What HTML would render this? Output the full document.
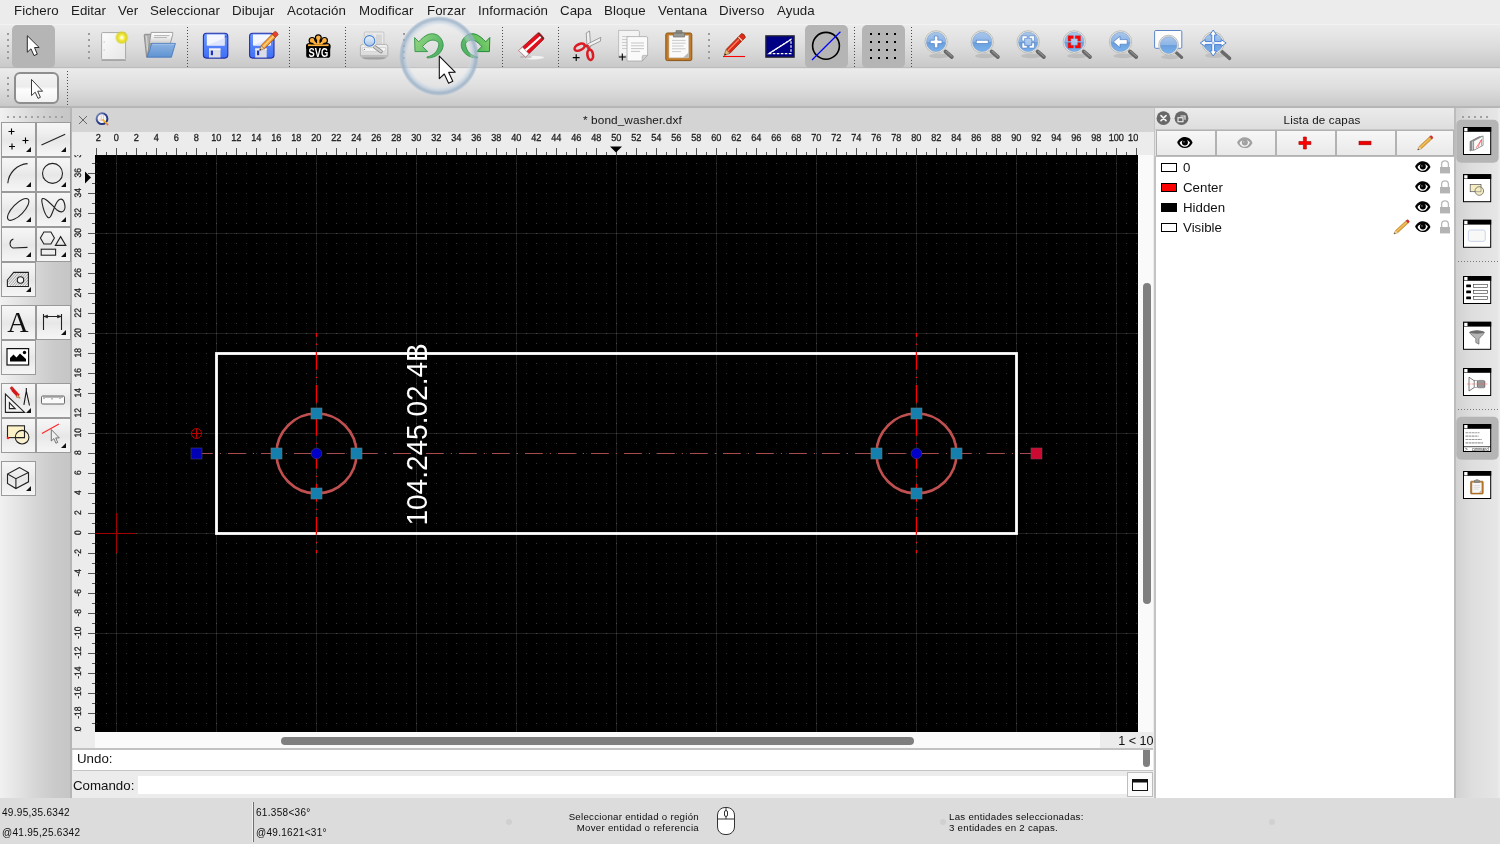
<!DOCTYPE html>
<html lang="es"><head><meta charset="utf-8"><title>bond_washer.dxf</title>
<style>
*{box-sizing:border-box;margin:0;padding:0}
html,body{width:1500px;height:844px;overflow:hidden;background:#ececec;font-family:"Liberation Sans",sans-serif;color:#111;}
.abs{position:absolute}
#app{will-change:transform;position:relative;width:1500px;height:844px;overflow:hidden;background:#ececec}
#menubar{position:absolute;left:0;top:0;width:1500px;height:24px;background:#ececec}
#menubar span{position:absolute;top:3px;font-size:13.3px;line-height:16px;color:#1c1c1c;white-space:nowrap;letter-spacing:0.05px}
#tb1{position:absolute;left:0;top:24px;width:1500px;height:44px;background:linear-gradient(#ebebeb 0%,#dfdfdf 45%,#c9c9c9 100%);border-top:1px solid #f2f2f2;border-bottom:1px solid #bbbbbb}
#tb2{position:absolute;left:0;top:68px;width:1500px;height:40px;background:linear-gradient(#ebebeb 0%,#dedede 50%,#c9c9c9 100%);border-top:1px solid #e4e4e4;border-bottom:2px solid #b6b6b6}
.sel{position:absolute;background:#b5b5b5;border-radius:5px}
.vdots{position:absolute;width:2px;background:repeating-linear-gradient(180deg,#9c9c9c 0 2px,transparent 2px 6px)}
.vsep{position:absolute;width:1px;background:repeating-linear-gradient(180deg,#4a4a4a 0 1px,transparent 1px 3px)}
#lefttb{position:absolute;left:0;top:108px;width:72px;height:690px;background:linear-gradient(90deg,#f1f1f1 0%,#e6e6e6 21%,#d6d6d6 49%,#cacaca 76%,#c6c6c6 97%,#b6b6b6 97.5%,#b6b6b6 100%)}
.lb{position:absolute;width:35px;height:35px;border:1px solid #9a9a9a;background:linear-gradient(#f6f6f6 0%,#efefef 30%,#e7e7e7 52%,#eeeeee 72%,#f5f5f5 100%)}
.lb svg{position:absolute;left:0;top:0}
.lb i{position:absolute;right:4px;bottom:4px;width:0;height:0;border-left:5px solid transparent;border-bottom:5px solid #111}
#tabbar{position:absolute;left:72px;top:108px;width:1083px;height:24px;background:#d4d4d4}
#rulerT{position:absolute;left:72px;top:132px;width:1083px;height:23px;background:#ececec;overflow:hidden}
#rulerL{position:absolute;left:72px;top:155px;width:23px;height:577px;background:#ececec;overflow:hidden}
#canvas{position:absolute;left:95px;top:155px;width:1043px;height:577px;background:#000}
.rt{text-rendering:geometricPrecision;font-size:10.200px;fill:#1c1c1c;stroke:#1c1c1c;stroke-width:0.300px;font-family:"Liberation Sans",sans-serif}
#statusbar{position:absolute;left:0;top:798px;width:1500px;height:46px;background:#dcdcdc}
#statusbar div{position:absolute;font-size:9.700px;color:#0c0c0c;white-space:nowrap;letter-spacing:0.270px}
#statusbar div.c{font-size:10px;letter-spacing:0.300px}
#rpanel{position:absolute;left:1155px;top:108px;width:299px;height:690px;background:#e2e2e2}
#righttb{position:absolute;left:1454px;top:108px;width:46px;height:690px;background:linear-gradient(90deg,#f0f0f0 0,#f0f0f0 0.5px,#bcbcbc 0.5px,#bcbcbc 2px,#d2d2d2 2px,#dedede 40%,#e6e6e6 96%,#ececec 97%,#ececec 100%)}
</style></head><body><div id="app">

<div id="menubar">
<span style="left:14px">Fichero</span><span style="left:71px">Editar</span><span style="left:118px">Ver</span><span style="left:150px">Seleccionar</span><span style="left:232px">Dibujar</span><span style="left:287px">Acotación</span><span style="left:359px">Modificar</span><span style="left:427px">Forzar</span><span style="left:478px">Información</span><span style="left:560px">Capa</span><span style="left:604px">Bloque</span><span style="left:658px">Ventana</span><span style="left:719px">Diverso</span><span style="left:777px">Ayuda</span>
</div>

<div id="tb1">
<div class="vdots" style="left:7px;top:8px;height:26px"></div>
<div class="sel" style="left:12px;top:0px;width:43px;height:43px"></div>
<div class="vdots" style="left:88px;top:8px;height:27px"></div>
<div class="vsep" style="left:187px;top:2px;height:40px"></div>
<div class="vsep" style="left:289px;top:2px;height:40px"></div>
<div class="vsep" style="left:345px;top:2px;height:40px"></div>
<div class="vdots" style="left:403px;top:8px;height:27px"></div>
<div class="vsep" style="left:502px;top:2px;height:40px"></div>
<div class="vsep" style="left:558px;top:2px;height:40px"></div>
<div class="vdots" style="left:708px;top:8px;height:27px"></div>
<div class="sel" style="left:805px;top:0px;width:43px;height:43px"></div>
<div class="vsep" style="left:854px;top:2px;height:40px"></div>
<div class="sel" style="left:862px;top:0px;width:43px;height:43px"></div>
<div class="vsep" style="left:911px;top:2px;height:40px"></div>
<svg class="abs" style="left:0;top:-1px" width="1500" height="44" viewBox="0 24 1500 44">
<defs>
<linearGradient id="gPaper" x1="0" y1="0" x2="1" y2="1"><stop offset="0" stop-color="#fdfdfd"/><stop offset="1" stop-color="#e6e6e6"/></linearGradient>
<radialGradient id="gGlow"><stop offset="0" stop-color="#fffff4"/><stop offset="0.180" stop-color="#fffbc0"/><stop offset="0.400" stop-color="#f2ea38"/><stop offset="0.720" stop-color="#dcd420" stop-opacity="0.900"/><stop offset="1" stop-color="#d8d020" stop-opacity="0"/></radialGradient>
<linearGradient id="gFolder" x1="0" y1="0" x2="0" y2="1"><stop offset="0" stop-color="#8db3e2"/><stop offset="1" stop-color="#5f93d2"/></linearGradient>
<linearGradient id="gFloppy" x1="0" y1="0" x2="0" y2="1"><stop offset="0" stop-color="#6d97ff"/><stop offset="1" stop-color="#3f6ff5"/></linearGradient>
<linearGradient id="gGreen" x1="0" y1="0" x2="1" y2="0.600"><stop offset="0" stop-color="#8ed46e"/><stop offset="0.500" stop-color="#5fbe60"/><stop offset="1" stop-color="#34a54c"/></linearGradient>
<linearGradient id="gLens" x1="0" y1="0" x2="0" y2="1"><stop offset="0" stop-color="#a9c6ea"/><stop offset="0.48" stop-color="#8db5e6"/><stop offset="0.5" stop-color="#6b9fdc"/><stop offset="1" stop-color="#79b0ec"/></linearGradient>
<linearGradient id="gPrn" x1="0" y1="0" x2="0" y2="1"><stop offset="0" stop-color="#f2f2f2"/><stop offset="1" stop-color="#d4d4d4"/></linearGradient>
<linearGradient id="gPLens" x1="0" y1="0" x2="0" y2="1"><stop offset="0" stop-color="#eaf2fb"/><stop offset="0.600" stop-color="#c4d8ee"/><stop offset="1" stop-color="#a4c0e2"/></linearGradient>
<linearGradient id="gFPaper" x1="0" y1="0" x2="0" y2="1"><stop offset="0" stop-color="#ffffff"/><stop offset="0.250" stop-color="#ececec"/><stop offset="0.550" stop-color="#c2c2c2"/><stop offset="1" stop-color="#d8d8d8"/></linearGradient>
<g id="mag">
<ellipse cx="3" cy="14" rx="10" ry="2.300" fill="#8a8a8a" opacity="0.300"/>
<path d="M9.400 9.600L15.700 15.100" stroke="#666" stroke-width="3.800" stroke-linecap="round"/>
<path d="M10 9.400L15.800 14.500" stroke="#8e8e8e" stroke-width="1.200" stroke-linecap="round"/>
<circle cx="0" cy="0" r="11.2" fill="#ecece6" stroke="#b9b9b4" stroke-width="0.9"/>
<circle cx="0" cy="0" r="9.7" fill="url(#gLens)" stroke="#7f9fca" stroke-width="0.6"/>
</g>
</defs>
<!-- select arrow (white with black outline) -->
<path d="M27.3 35.7V52.2L31 48.8L34 55.6L37.3 54.2L34.5 47.5H39.2Z" fill="#fff" stroke="#2a2a2a" stroke-width="1" stroke-linejoin="round"/>
<!-- new document -->
<path d="M101.5 59.8H126V61H101.5Z" fill="#8a8a8a" opacity="0.6"/>
<rect x="101.6" y="32.6" width="24" height="27" rx="1" fill="url(#gPaper)" stroke="#a8a8a8" stroke-width="1"/>
<rect x="103.5" y="41.5" width="1.5" height="1" fill="#c8c8c8"/><rect x="103.5" y="49.5" width="1.5" height="1" fill="#c8c8c8"/>
<circle cx="121.8" cy="37.6" r="7" fill="url(#gGlow)"/>
<!-- open folder -->
<path d="M144.200 35.200Q144.200 34.300 145.100 34.300H152V55L146.600 57.200Z" fill="#b2b2b2" stroke="#7c7c7c" stroke-width="0.800" stroke-linejoin="round"/>
<path d="M146.300 36L148 56" stroke="#d6d6d6" stroke-width="1.200"/>
<path d="M151.200 32.400H172.700V34.500L170.300 43.600H150L147.400 55.500Z" fill="url(#gFPaper)" stroke="#8c8c8c" stroke-width="0.800" stroke-linejoin="round"/>
<path d="M154.200 35.600H169.500M153.800 37.600H167" stroke="#b2b2b2" stroke-width="1"/>
<path d="M151.600 43.400H175.400L171.400 57.200H147Q149.800 51.500 151.600 43.400Z" fill="url(#gFolder)" stroke="#4a7cc0" stroke-width="0.900" stroke-linejoin="round"/>
<path d="M152.300 44.300H174.400" stroke="#a8c6ea" stroke-width="0.800"/>
<!-- save -->
<g id="floppy">
<rect x="203.4" y="33.3" width="24.4" height="24.8" rx="3" fill="url(#gFloppy)" stroke="#2630a8" stroke-width="1.1"/>
<path d="M206.8 34.5H224.6V45.5H206.8Z" fill="#f4f6ff"/>
<path d="M206.8 45.5L224.6 38V45.5Z" fill="#dfe6fb"/>
<path d="M209 48.5H220.5V57.5H209Z" fill="#dcdce4"/>
<path d="M209 48.5H220.5V50H209Z" fill="#f4f4f8"/>
<rect x="210.8" y="50.6" width="2.2" height="4.6" fill="#1c34c0"/>
<rect x="225.3" y="35.8" width="1.2" height="1.6" fill="#2c44c8"/>
</g>
<use href="#floppy" x="46.2"/>
<!-- pencil on save-as -->
<path d="M264.350 48.800L261.050 45.600L272.250 34.100L275.550 37.300Z" fill="#f5a030" stroke="#a8561a" stroke-width="0.800" stroke-linejoin="round"/>
<path d="M262.700 47.200L273.900 35.700" stroke="#ffd28a" stroke-width="1.300"/>
<path d="M275.550 37.300L272.250 34.100L274.850 31.400Q277.400 31.600 278.150 34.600Z" fill="#e8402a" stroke="#a02818" stroke-width="0.700" stroke-linejoin="round"/>
<path d="M259.600 50.400L261.050 45.600L264.350 48.800Z" fill="#ecd0a8" stroke="#8a5a3a" stroke-width="0.600" stroke-linejoin="round"/>
<path d="M259.600 50.400L260.100 48.700L261.300 49.900Z" fill="#222"/>
<!-- SVG export -->
<path d="M318.3 46.6L327.1 46.6 M318.3 46.6L324.5 40.4 M318.3 46.6L318.3 37.8 M318.3 46.6L312.1 40.4 M318.3 46.6L309.5 46.6" stroke="#000" stroke-width="5" stroke-linecap="round" fill="none"/>
<circle cx="327.1" cy="46.6" r="3.500" fill="#000"/><circle cx="324.5" cy="40.4" r="3.500" fill="#000"/><circle cx="318.3" cy="37.8" r="3.500" fill="#000"/><circle cx="312.1" cy="40.4" r="3.500" fill="#000"/><circle cx="309.5" cy="46.6" r="3.500" fill="#000"/>
<path d="M318.3 46.6L327.1 46.6 M318.3 46.6L324.5 40.4 M318.3 46.6L318.3 37.8 M318.3 46.6L312.1 40.4 M318.3 46.6L309.5 46.6" stroke="#ffb13b" stroke-width="2.400" stroke-linecap="round" fill="none"/>
<circle cx="327.1" cy="46.6" r="2.300" fill="#ffb13b"/><circle cx="324.5" cy="40.4" r="2.300" fill="#ffb13b"/><circle cx="318.3" cy="37.8" r="2.300" fill="#ffb13b"/><circle cx="312.1" cy="40.4" r="2.300" fill="#ffb13b"/><circle cx="309.5" cy="46.6" r="2.300" fill="#ffb13b"/>
<rect x="306.200" y="46" width="24" height="11.800" rx="2.600" fill="#000"/>
<path d="M306.200 48.600V44.600H330.200V48.600Z" fill="#000"/>
<path d="M308 45.300H328.600" stroke="#ffb13b" stroke-width="1.600"/>
<text x="318.300" y="56.700" text-anchor="middle" font-family="Liberation Sans, sans-serif" font-weight="bold" font-size="13.400" fill="#fff" textLength="19.600" lengthAdjust="spacingAndGlyphs">SVG</text>
<!-- print preview -->
<ellipse cx="374" cy="58" rx="12" ry="1.600" fill="#777" opacity="0.550"/>
<rect x="364.300" y="32" width="19.600" height="14" rx="1" fill="#ebebeb" stroke="#bdbdbd" stroke-width="0.800"/>
<rect x="376" y="34.500" width="6" height="9.500" fill="#d6d6d6"/>
<rect x="360.400" y="44.400" width="27.400" height="12.800" rx="2.200" fill="url(#gPrn)" stroke="#a6a6a6" stroke-width="0.800"/>
<path d="M362.400 47.600H385.600V49.600Q385.600 51.400 383.800 51.400H364.200Q362.400 51.400 362.400 49.600Z" fill="#f6f6f6" stroke="#c2c2c2" stroke-width="0.600"/>
<circle cx="364.400" cy="49.400" r="0.600" fill="#777"/>
<path d="M360.800 55H387.400V55.600Q387.400 56.900 386 56.900H362.200Q360.800 56.900 360.800 55.600Z" fill="#bdbdbd"/>
<path d="M374.800 47L381 51.500" stroke="#8c8c8c" stroke-width="3.600" stroke-linecap="round"/>
<path d="M374.800 47L381 51.500" stroke="#d2d2d2" stroke-width="2" stroke-linecap="round"/>
<circle cx="369.500" cy="40.900" r="6.900" fill="#f2f2f0" stroke="#c9c9c6" stroke-width="0.600"/>
<circle cx="369.500" cy="40.900" r="5.300" fill="url(#gPLens)" stroke="#4a80d0" stroke-width="1.100"/>
<!-- undo / redo -->
<path id="undo" d="M414.600 37.500L418.700 41.900C421.500 38.500 425.500 35.500 428.100 34.500C431 33.400 434.500 33.500 437.400 35.100C440 36.600 442.500 40 443.100 43.700C443.600 47 442 51 439 53.800C436 56.500 432 57.800 427.300 58L426.900 57C430 56.500 433 54.800 435 53C437 51 438.600 47.500 438.800 44.900C438.900 43 438.300 42.200 437.400 41.700C435.500 40 432.500 39.800 430.200 40.500C427.500 41.300 424.500 44.400 422.500 46.500L427.700 51.600H415Z" fill="url(#gGreen)" stroke="#1f8a38" stroke-width="1" stroke-linejoin="round"/>
<use href="#undo" transform="translate(904.4 0) scale(-1 1)"/>
<!-- eraser -->
<ellipse cx="533" cy="57.6" rx="11" ry="1.8" fill="#fff" opacity="0.7"/>
<ellipse cx="526" cy="57" rx="6" ry="1.4" fill="#999" opacity="0.5"/>
<path d="M518.6 50.6L537.6 33.2Q539 32.4 540 33.4L543.6 37.6Q544.2 38.8 543.2 39.8L525.6 57Z" fill="#e2101c" stroke="#a00c14" stroke-width="0.8" stroke-linejoin="round"/>
<path d="M524.6 49.8L540.6 35.4L542 37L526 51.6Z" fill="#fff"/>
<path d="M538.4 33L543.4 39.2" stroke="#5a2a2a" stroke-width="1.2"/>
<path d="M518.6 50.6L522.4 47.2L528.8 54L525.6 57Z" fill="#fafafa" stroke="#b0b0b0" stroke-width="0.7"/>
<!-- scissors -->
<path d="M586.2 33L589.6 31L590.6 47.4L587.2 48.6Z" fill="#f0f0f0" stroke="#8a8a8a" stroke-width="0.8"/>
<path d="M600.8 37.4L600.4 41.2L589 46.6L587.4 44Z" fill="#f0f0f0" stroke="#8a8a8a" stroke-width="0.8"/>
<g fill="none" stroke="#dc1c24" stroke-width="2.600">
<ellipse cx="579.6" cy="47.2" rx="5.4" ry="3" transform="rotate(-25 579.6 47.2)"/>
<ellipse cx="590.2" cy="54.8" rx="2.8" ry="5.2" transform="rotate(-8 590.2 54.8)"/>
<path d="M584.4 45.6L588.6 46.4M588.2 47L589.6 50.2"/>
</g>
<path d="M572.8 57.6H579.6M576.2 54.2V61" stroke="#000" stroke-width="1.1"/>
<!-- copy -->
<path d="M618.6 30.4H638Q639.4 30.4 639.4 31.8V56H618.6Z" fill="#f4f4f4" stroke="#b4b4b4" stroke-width="0.8"/>
<path d="M622 36.5H630M622 39.5H629M622 42.5H628M622 45.5H627M622 48.5H627" stroke="#c8c8c8" stroke-width="0.9"/>
<path d="M627 36.6H646.2Q647.6 36.6 647.6 38V55.4L642.2 61H627Z" fill="#fafafa" stroke="#a8a8a8" stroke-width="0.8"/>
<path d="M647.6 55.4L642.2 61V56.4Q642.2 55.4 643.2 55.4Z" fill="#d0d0d0" stroke="#a0a0a0" stroke-width="0.6"/>
<path d="M631 43H644M631 45.8H644M631 48.6H644M631 51.4H640" stroke="#c0c0c0" stroke-width="0.9"/>
<path d="M618.8 57H625.8M622.3 53.5V60.5" stroke="#000" stroke-width="1.1"/>
<!-- paste -->
<rect x="665.8" y="33" width="26" height="27.6" rx="1.6" fill="#c07a28" stroke="#8a5618" stroke-width="1"/>
<path d="M669 35.5H688.6V57.8H669Z" fill="#fafafa" stroke="#c8c8c8" stroke-width="0.6"/>
<path d="M688.6 52.4V57.8H683Z" fill="#b8b8b8"/>
<path d="M672 40.4H685.6M672 43.2H685.6M672 46H683.6M672 48.8H685.6M672 51.6H681" stroke="#c4c4c4" stroke-width="0.9"/>
<path d="M673.4 33H684.6V37H673.4Z" fill="#9a9a94" stroke="#6e6e68" stroke-width="0.7"/>
<path d="M676 30.6H682V33H676Z" fill="#8a8a84" stroke="#6e6e68" stroke-width="0.7"/>
<!-- pencil (red) -->
<path d="M723 56.500H745" stroke="#ff0000" stroke-width="1.100"/>
<path d="M729.940 53.330L726.060 49.570L737.560 37.720L741.440 41.480Z" fill="#de2616" stroke="#8a3410" stroke-width="0.800" stroke-linejoin="round"/>
<path d="M727.600 51L739 39.200" stroke="#ff8060" stroke-width="1.300"/>
<path d="M741.440 41.480L737.560 37.720L741.560 33.620Q744.600 33.800 745.440 37.380Z" fill="#e02818" stroke="#8a3410" stroke-width="0.800" stroke-linejoin="round"/>
<path d="M738.400 37L742.200 40.700" stroke="#f4d0c0" stroke-width="1.200"/>
<path d="M724.200 55.400L726.060 49.570L729.940 53.330Z" fill="#e8b880" stroke="#8a5a2a" stroke-width="0.700" stroke-linejoin="round"/>
<path d="M724.200 55.400L724.900 53.200L726.400 54.700Z" fill="#222"/>
<!-- blue screen -->
<rect x="765.8" y="35.8" width="28.4" height="21.4" fill="#000084" stroke="#2c2c2c" stroke-width="1.2"/>
<path d="M769 53.6L791 39.4V53.6Z" fill="none" stroke="#fff" stroke-width="1.2" stroke-dasharray="2.6 1.4"/>
<path d="M769 53.6L791 39.4" stroke="#fff" stroke-width="1.2"/>
<!-- circle with blue line -->
<circle cx="826" cy="45.8" r="13.4" fill="none" stroke="#000" stroke-width="1.6"/>
<path d="M812 60L840.4 31.8" stroke="#0000ff" stroke-width="1.2"/>
<!-- grid dots -->
<g fill="#000">
<rect x="870" y="33" width="2" height="2"/><rect x="878" y="33" width="2" height="2"/><rect x="886" y="33" width="2" height="2"/><rect x="894" y="33" width="2" height="2"/>
<rect x="870" y="41" width="2" height="2"/><rect x="878" y="41" width="2" height="2"/><rect x="886" y="41" width="2" height="2"/><rect x="894" y="41" width="2" height="2"/>
<rect x="870" y="49" width="2" height="2"/><rect x="878" y="49" width="2" height="2"/><rect x="886" y="49" width="2" height="2"/><rect x="894" y="49" width="2" height="2"/>
<rect x="870" y="57" width="2" height="2"/><rect x="878" y="57" width="2" height="2"/><rect x="886" y="57" width="2" height="2"/><rect x="894" y="57" width="2" height="2"/>
</g>
<use href="#mag" x="936.1" y="41.9"/>
<path d="M930.2 40.2H934.4V36H937.8V40.2H942V43.6H937.8V47.8H934.4V43.6H930.2Z" fill="#fff" stroke="#4a7cc0" stroke-width="0.7"/>
<use href="#mag" x="982.2" y="41.9"/>
<rect x="976.2" y="40.2" width="12" height="3.4" fill="#fff" stroke="#4a7cc0" stroke-width="0.7"/>
<use href="#mag" x="1028.2" y="41.9"/>
<rect x="1025.2" y="38.9" width="6" height="6" fill="#b4d0f0" opacity="0.8"/>
<path id="brk" d="M1022 41V35.8H1027.2V38.4H1024.6V41ZM1029.2 35.8H1034.4V41H1031.8V38.4H1029.2ZM1022 42.8H1024.6V45.4H1027.2V48H1022ZM1034.4 42.8V48H1029.2V45.4H1031.8V42.8Z" fill="#fff" stroke="#3a6cb8" stroke-width="0.5"/>
<use href="#mag" x="1074.3" y="41.9"/>
<rect x="1071.3" y="38.9" width="6" height="6" fill="#b4d0f0" opacity="0.8"/>
<path d="M1068.1 41V35.8H1073.3V38.4H1070.7V41ZM1075.3 35.8H1080.5V41H1077.9V38.4H1075.3ZM1068.1 42.8H1070.7V45.4H1073.3V48H1068.1ZM1080.5 42.8V48H1075.3V45.4H1077.9V42.8Z" fill="#ff0000" stroke="#c82020" stroke-width="0.4"/>
<use href="#mag" x="1120.5" y="41.9"/>
<path d="M1113.4 41.9L1120 36.2V39.6H1127.2V44.2H1120V47.6Z" fill="#fff" stroke="#4a7cc0" stroke-width="0.7" stroke-linejoin="round"/>
<!-- window zoom -->
<rect x="1154.6" y="30.5" width="27.2" height="17.8" rx="1.2" fill="#fdfdfd" stroke="#5a86c8" stroke-width="1"/>
<ellipse cx="1170" cy="57" rx="9" ry="2.2" fill="#9a9a9a" opacity="0.35"/>
<path d="M1176 52.4L1181.6 57.4" stroke="#6a6a6a" stroke-width="3.2" stroke-linecap="round"/>
<circle cx="1168.6" cy="45.1" r="9.9" fill="#ecece6" stroke="#b9b9b4" stroke-width="0.9"/>
<circle cx="1168.6" cy="45.1" r="8.4" fill="url(#gLens)" stroke="#7f9fca" stroke-width="0.6"/>
<!-- pan zoom -->
<ellipse cx="1215" cy="55.5" rx="10" ry="2.4" fill="#9a9a9a" opacity="0.35"/>
<path d="M1221.6 51.4L1229.6 58.4" stroke="#6a6a6a" stroke-width="3.4" stroke-linecap="round"/>
<circle cx="1213.2" cy="43" r="11" fill="#ecece6" stroke="#b9b9b4" stroke-width="0.9"/>
<circle cx="1213.2" cy="43" r="9.5" fill="url(#gLens)" stroke="#7f9fca" stroke-width="0.6"/>
<path d="M1213.2 30L1216.6 35H1214.6V41.6H1221.2V39.6L1226.2 43L1221.2 46.4V44.4H1214.6V51H1216.6L1213.2 56L1209.8 51H1211.8V44.4H1205.2V46.4L1200.2 43L1205.2 39.6V41.6H1211.8V35H1209.8Z" fill="#fff" stroke="#3f78d0" stroke-width="0.9" stroke-linejoin="round"/>
<rect x="1211.8" y="41.6" width="2.8" height="2.8" fill="#a8c4ec"/>

</svg>

</div>
<div id="tb2">
<div class="vdots" style="left:7px;top:8px;height:20px"></div>
<div class="abs" style="left:14px;top:3px;width:45px;height:32px;border:2px solid #8e8e8e;border-radius:6px;background:linear-gradient(#f4f4f4 0%,#ececec 45%,#fdfdfd 55%,#f2f2f2 100%)"></div>
<div class="vsep" style="left:67px;top:2px;height:34px"></div>
<svg class="abs" style="left:0;top:-1px" width="80" height="40" viewBox="0 68 80 40">
<path d="M31.5 79.4V95.6L35.2 92.2L38 98.4L40.4 97.3L37.7 91.2H42.6Z" fill="#fff" stroke="#3a3a3a" stroke-width="1" stroke-linejoin="round"/>
</svg>

</div>

<div id="lefttb">
<div class="abs" style="left:7px;top:8px;width:56px;height:2px;background:repeating-linear-gradient(90deg,#a2a2a2 0 2px,transparent 2px 6px)"></div>
<!--LEFTBTNS-->
<div class="lb" style="left:1px;top:14px"><i></i></div>
<div class="lb" style="left:36px;top:14px"><i></i></div>
<div class="lb" style="left:1px;top:49px"><i></i></div>
<div class="lb" style="left:36px;top:49px"><i></i></div>
<div class="lb" style="left:1px;top:84px"><i></i></div>
<div class="lb" style="left:36px;top:84px"><i></i></div>
<div class="lb" style="left:1px;top:119px"><i></i></div>
<div class="lb" style="left:36px;top:119px"><i></i></div>
<div class="lb" style="left:1px;top:154px"><i></i></div>
<div class="lb" style="left:1px;top:197px"></div>
<div class="lb" style="left:36px;top:197px"><i></i></div>
<div class="lb" style="left:1px;top:232px"></div>
<div class="lb" style="left:1px;top:275px"><i></i></div>
<div class="lb" style="left:36px;top:275px"></div>
<div class="lb" style="left:1px;top:310px"></div>
<div class="lb" style="left:36px;top:310px"><i></i></div>
<div class="lb" style="left:1px;top:353px"><i></i></div>
<svg class="abs" style="left:0;top:0" width="72" height="400" viewBox="0 108 72 400">
<g fill="none" stroke="#222" stroke-width="1.1">
<!-- points -->
<path d="M8.5 131.5H14.5M11.5 128.5V134.5M22.5 140.5H28.5M25.5 137.5V143.5M9 146.5H15M12 143.5V149.5" stroke="#000"/>
<!-- line -->
<path d="M41.5 145L65.2 134.2"/>
<!-- arc -->
<path d="M7.8 183.2A21.5 21.5 0 0 1 27.6 163.6"/>
<!-- circle -->
<circle cx="52.5" cy="173.4" r="10"/>
<!-- ellipse -->
<ellipse cx="18.2" cy="209.4" rx="14.2" ry="5.6" transform="rotate(-46 18.2 209.4)"/>
<!-- spline -->
<path d="M42 202.5C40 192 52 205 57 210C62 214 66.5 211 64.5 203.5C62.5 196 58 199 55 206C52 213 50.500 220 47.5 217C44.5 214 43 208 42 202.500Z"/>
<!-- polyline -->
<path d="M13.4 239A4.8 4.8 0 0 0 13 248L27.5 247.4"/>
<!-- shapes -->
<path d="M40.400 238L43.900 232H50.900L54.400 238L50.900 244H43.900Z"/>
<path d="M60.600 236.6L65.800 245.400H55.400Z"/>
<rect x="41.200" y="249.200" width="14.400" height="6"/>
<!-- hatch -->
<path d="M9 284L19 272.500M9.500 286.500L21.500 272.500M12 286.500L24 272.500M14.500 286.500L26.500 272.500M17 286.500L28.400 273.500M19.500 286.500L28.400 276.500M22 286.500L28.400 279.500M24.500 286.500L28.400 282.500M8 282L16.500 272.500" stroke="#777" stroke-width="0.6"/>
<path d="M7.400 280L13.700 272.400H28.400V286.500H7.400Z"/>
<circle cx="20.500" cy="280" r="3.200" fill="#f4f4f4"/>
<!-- dimension -->
<path d="M43.500 314V330M61.500 314V330M44 316.500H61"/>
<path d="M44 316.500L47.500 315V318ZM61 316.500L57.500 315V318Z" fill="#222" stroke-width="0.6"/>
<!-- image -->
<rect x="7" y="348.600" width="21.600" height="16.400" fill="#fff" stroke="#111" stroke-width="1.200"/>
<path d="M10 361.500V358L13.500 354.500L16.500 357.500L20 353.500L26 359V361.500Z" fill="#000" stroke="none"/>
<circle cx="24.500" cy="352.500" r="1.700" fill="#000" stroke="none"/>
<!-- set square, pencil, compass -->
<path d="M5.400 394V412.400H24.600Z" fill="#f4f4f4"/>
<path d="M9.400 402.600V408.600H15.200Z"/>
<path d="M26.300 388V391M26.300 391L23.900 404.800M26.300 391L29.500 405.500" stroke="#111" stroke-width="1.100"/>
<path d="M12.500 389.500L18.500 396" stroke="#d81818" stroke-width="3.400"/>
<path d="M10 388L12 386.500L13.800 388.400L11.700 390.200Z" fill="#e02020" stroke="#a01010" stroke-width="0.500"/>
<path d="M17.500 394.500L20.200 398.200L16 397Z" fill="#e8b880" stroke="#805020" stroke-width="0.500"/>
<!-- ruler -->
<rect x="41.500" y="396" width="23" height="8" rx="1.200" fill="#fafafa" stroke="#555" stroke-width="0.900"/>
<path d="M44 396.500V399M46 396.500V398M48 396.500V398M50 396.500V398M52 396.500V399.500M54 396.500V398M56 396.500V398M58 396.500V398M60 396.500V399M62 396.500V398" stroke="#444" stroke-width="0.700"/>
<!-- block -->
<rect x="7.500" y="425.800" width="17" height="11.800" fill="#fdf1c8" stroke="#222"/>
<circle cx="22.100" cy="437.200" r="6.800" fill="#fdf1c8" fill-opacity="0.800" stroke="#222"/>
<path d="M15.300 437.600H24.500V430.500" stroke="#222"/>
<circle cx="8" cy="438" r="1.300" fill="#ff2020" stroke="none"/>
<!-- select line -->
<path d="M41.900 433.600L59 424" stroke="#ff2a2a" stroke-width="1.200"/>
<path d="M51.300 429.500V441L53.900 438.600L55.900 443.200L57.700 442.400L55.700 437.900H59.300Z" fill="#f0f0f0" stroke="#666" stroke-width="0.900" stroke-linejoin="round"/>
<!-- 3d box -->
<path d="M19.500 467.600L7.500 474V483.500L15.900 488.500L28.500 481.800V472.600ZM7.500 474L15.900 478.700L28.500 472.600M15.900 478.700V488.500"/>
</g>
<text x="18" y="331.800" text-anchor="middle" font-family="Liberation Serif, serif" font-size="29.500" fill="#111">A</text>
</svg>
</div>

<div id="tabbar">
<svg class="abs" style="left:5px;top:6px" width="12" height="12" viewBox="0 0 12 12"><path d="M2 2L10 10M10 2L2 10" stroke="#606060" stroke-width="0.950" fill="none"/></svg>
<svg class="abs" style="left:23px;top:3px" width="16" height="18" viewBox="0 0 16 18"><defs><linearGradient id="gQ" x1="0" y1="0" x2="1" y2="1"><stop offset="0" stop-color="#8c9cc8"/><stop offset="0.450" stop-color="#2c3f8c"/><stop offset="1" stop-color="#1c2f7c"/></linearGradient></defs><circle cx="7" cy="7.700" r="5.400" fill="#f6f4f2" stroke="url(#gQ)" stroke-width="2"/><path d="M6.200 4.500V10M3.500 9H8" stroke="#c8a0a0" stroke-width="0.500"/><path d="M8.400 3.800V8" stroke="#aaa" stroke-width="0.500"/><path d="M7.600 8.400L12 13" stroke="#f4a010" stroke-width="1.800"/><path d="M7.800 8.200L11.600 12.200" stroke="#ffd060" stroke-width="0.600"/><circle cx="12.500" cy="13.500" r="1" fill="#e86a6a"/></svg>
<div class="abs" style="left:511px;top:4.700px;font-size:11.800px;color:#151515;white-space:nowrap;letter-spacing:0.100px">* bond_washer.dxf</div>
</div>

<svg id="rulerT" width="1083" height="23" viewBox="72 132 1083 23">
<rect x="72" y="132" width="1083" height="23" fill="#ececec"/>
<rect x="1138" y="132" width="17" height="23" fill="#ececec"/>
<path d="M96.5 148V155 M106.5 152V155 M116.5 148V155 M126.5 152V155 M136.5 148V155 M146.5 152V155 M156.5 148V155 M166.5 152V155 M176.5 148V155 M186.5 152V155 M196.5 148V155 M206.5 152V155 M216.5 148V155 M226.5 152V155 M236.5 148V155 M246.5 152V155 M256.5 148V155 M266.5 152V155 M276.5 148V155 M286.5 152V155 M296.5 148V155 M306.5 152V155 M316.5 148V155 M326.5 152V155 M336.5 148V155 M346.5 152V155 M356.5 148V155 M366.5 152V155 M376.5 148V155 M386.5 152V155 M396.5 148V155 M406.5 152V155 M416.5 148V155 M426.5 152V155 M436.5 148V155 M446.5 152V155 M456.5 148V155 M466.5 152V155 M476.5 148V155 M486.5 152V155 M496.5 148V155 M506.5 152V155 M516.5 148V155 M526.5 152V155 M536.5 148V155 M546.5 152V155 M556.5 148V155 M566.5 152V155 M576.5 148V155 M586.5 152V155 M596.5 148V155 M606.5 152V155 M616.5 148V155 M626.5 152V155 M636.5 148V155 M646.5 152V155 M656.5 148V155 M666.5 152V155 M676.5 148V155 M686.5 152V155 M696.5 148V155 M706.5 152V155 M716.5 148V155 M726.5 152V155 M736.5 148V155 M746.5 152V155 M756.5 148V155 M766.5 152V155 M776.5 148V155 M786.5 152V155 M796.5 148V155 M806.5 152V155 M816.5 148V155 M826.5 152V155 M836.5 148V155 M846.5 152V155 M856.5 148V155 M866.5 152V155 M876.5 148V155 M886.5 152V155 M896.5 148V155 M906.5 152V155 M916.5 148V155 M926.5 152V155 M936.5 148V155 M946.5 152V155 M956.5 148V155 M966.5 152V155 M976.5 148V155 M986.5 152V155 M996.5 148V155 M1006.5 152V155 M1016.5 148V155 M1026.5 152V155 M1036.5 148V155 M1046.5 152V155 M1056.5 148V155 M1066.5 152V155 M1076.5 148V155 M1086.5 152V155 M1096.5 148V155 M1106.5 152V155 M1116.5 148V155 M1126.5 152V155 M1136.5 148V155" stroke="#555" stroke-width="1" fill="none"/>
<text class="rt" transform="translate(98.3 140.9) scale(0.9 1)" text-anchor="middle">2</text>
<text class="rt" transform="translate(116.3 140.9) scale(0.9 1)" text-anchor="middle">0</text>
<text class="rt" transform="translate(136.3 140.9) scale(0.9 1)" text-anchor="middle">2</text>
<text class="rt" transform="translate(156.3 140.9) scale(0.9 1)" text-anchor="middle">4</text>
<text class="rt" transform="translate(176.3 140.9) scale(0.9 1)" text-anchor="middle">6</text>
<text class="rt" transform="translate(196.3 140.9) scale(0.9 1)" text-anchor="middle">8</text>
<text class="rt" transform="translate(216.3 140.9) scale(0.9 1)" text-anchor="middle">10</text>
<text class="rt" transform="translate(236.3 140.9) scale(0.9 1)" text-anchor="middle">12</text>
<text class="rt" transform="translate(256.3 140.9) scale(0.9 1)" text-anchor="middle">14</text>
<text class="rt" transform="translate(276.3 140.9) scale(0.9 1)" text-anchor="middle">16</text>
<text class="rt" transform="translate(296.3 140.9) scale(0.9 1)" text-anchor="middle">18</text>
<text class="rt" transform="translate(316.3 140.9) scale(0.9 1)" text-anchor="middle">20</text>
<text class="rt" transform="translate(336.3 140.9) scale(0.9 1)" text-anchor="middle">22</text>
<text class="rt" transform="translate(356.3 140.9) scale(0.9 1)" text-anchor="middle">24</text>
<text class="rt" transform="translate(376.3 140.9) scale(0.9 1)" text-anchor="middle">26</text>
<text class="rt" transform="translate(396.3 140.9) scale(0.9 1)" text-anchor="middle">28</text>
<text class="rt" transform="translate(416.3 140.9) scale(0.9 1)" text-anchor="middle">30</text>
<text class="rt" transform="translate(436.3 140.9) scale(0.9 1)" text-anchor="middle">32</text>
<text class="rt" transform="translate(456.3 140.9) scale(0.9 1)" text-anchor="middle">34</text>
<text class="rt" transform="translate(476.3 140.9) scale(0.9 1)" text-anchor="middle">36</text>
<text class="rt" transform="translate(496.3 140.9) scale(0.9 1)" text-anchor="middle">38</text>
<text class="rt" transform="translate(516.3 140.9) scale(0.9 1)" text-anchor="middle">40</text>
<text class="rt" transform="translate(536.3 140.9) scale(0.9 1)" text-anchor="middle">42</text>
<text class="rt" transform="translate(556.3 140.9) scale(0.9 1)" text-anchor="middle">44</text>
<text class="rt" transform="translate(576.3 140.9) scale(0.9 1)" text-anchor="middle">46</text>
<text class="rt" transform="translate(596.3 140.9) scale(0.9 1)" text-anchor="middle">48</text>
<text class="rt" transform="translate(616.3 140.9) scale(0.9 1)" text-anchor="middle">50</text>
<text class="rt" transform="translate(636.3 140.9) scale(0.9 1)" text-anchor="middle">52</text>
<text class="rt" transform="translate(656.3 140.9) scale(0.9 1)" text-anchor="middle">54</text>
<text class="rt" transform="translate(676.3 140.9) scale(0.9 1)" text-anchor="middle">56</text>
<text class="rt" transform="translate(696.3 140.9) scale(0.9 1)" text-anchor="middle">58</text>
<text class="rt" transform="translate(716.3 140.9) scale(0.9 1)" text-anchor="middle">60</text>
<text class="rt" transform="translate(736.3 140.9) scale(0.9 1)" text-anchor="middle">62</text>
<text class="rt" transform="translate(756.3 140.9) scale(0.9 1)" text-anchor="middle">64</text>
<text class="rt" transform="translate(776.3 140.9) scale(0.9 1)" text-anchor="middle">66</text>
<text class="rt" transform="translate(796.3 140.9) scale(0.9 1)" text-anchor="middle">68</text>
<text class="rt" transform="translate(816.3 140.9) scale(0.9 1)" text-anchor="middle">70</text>
<text class="rt" transform="translate(836.3 140.9) scale(0.9 1)" text-anchor="middle">72</text>
<text class="rt" transform="translate(856.3 140.9) scale(0.9 1)" text-anchor="middle">74</text>
<text class="rt" transform="translate(876.3 140.9) scale(0.9 1)" text-anchor="middle">76</text>
<text class="rt" transform="translate(896.3 140.9) scale(0.9 1)" text-anchor="middle">78</text>
<text class="rt" transform="translate(916.3 140.9) scale(0.9 1)" text-anchor="middle">80</text>
<text class="rt" transform="translate(936.3 140.9) scale(0.9 1)" text-anchor="middle">82</text>
<text class="rt" transform="translate(956.3 140.9) scale(0.9 1)" text-anchor="middle">84</text>
<text class="rt" transform="translate(976.3 140.9) scale(0.9 1)" text-anchor="middle">86</text>
<text class="rt" transform="translate(996.3 140.9) scale(0.9 1)" text-anchor="middle">88</text>
<text class="rt" transform="translate(1016.3 140.9) scale(0.9 1)" text-anchor="middle">90</text>
<text class="rt" transform="translate(1036.3 140.9) scale(0.9 1)" text-anchor="middle">92</text>
<text class="rt" transform="translate(1056.3 140.9) scale(0.9 1)" text-anchor="middle">94</text>
<text class="rt" transform="translate(1076.3 140.9) scale(0.9 1)" text-anchor="middle">96</text>
<text class="rt" transform="translate(1096.3 140.9) scale(0.9 1)" text-anchor="middle">98</text>
<text class="rt" transform="translate(1116.3 140.9) scale(0.9 1)" text-anchor="middle">100</text>
<g clip-path="url(#clipT)"><text class="rt" transform="translate(1135.7 140.9) scale(0.9 1)" text-anchor="middle">102</text></g>
<defs><clipPath id="clipT"><rect x="1100" y="132" width="38" height="23"/></clipPath></defs>
<path d="M610 146.5H622L616 152.5Z" fill="#000"/>
</svg>
<svg id="rulerL" width="23" height="593" viewBox="72 155 23 593" style="height:593px">
<rect x="72" y="155" width="23" height="593" fill="#ececec"/>
<path d="M92 723.5H95 M88 713.5H95 M92 703.5H95 M88 693.5H95 M92 683.5H95 M88 673.5H95 M92 663.5H95 M88 653.5H95 M92 643.5H95 M88 633.5H95 M92 623.5H95 M88 613.5H95 M92 603.5H95 M88 593.5H95 M92 583.5H95 M88 573.5H95 M92 563.5H95 M88 553.5H95 M92 543.5H95 M88 533.5H95 M92 523.5H95 M88 513.5H95 M92 503.5H95 M88 493.5H95 M92 483.5H95 M88 473.5H95 M92 463.5H95 M88 453.5H95 M92 443.5H95 M88 433.5H95 M92 423.5H95 M88 413.5H95 M92 403.5H95 M88 393.5H95 M92 383.5H95 M88 373.5H95 M92 363.5H95 M88 353.5H95 M92 343.5H95 M88 333.5H95 M92 323.5H95 M88 313.5H95 M92 303.5H95 M88 293.5H95 M92 283.5H95 M88 273.5H95 M92 263.5H95 M88 253.5H95 M92 243.5H95 M88 233.5H95 M92 223.5H95 M88 213.5H95 M92 203.5H95 M88 193.5H95 M92 183.5H95 M88 173.5H95 M92 163.5H95" stroke="#555" stroke-width="1" fill="none"/>
<defs><clipPath id="clipL"><rect x="72" y="155" width="23" height="576.400"/></clipPath></defs><g clip-path="url(#clipL)">
<text class="rt" transform="translate(81.200 732.7) rotate(-90) scale(0.830 0.920)" text-anchor="middle" x="0" y="0">-20</text>
<text class="rt" transform="translate(81.200 712.7) rotate(-90) scale(0.830 0.920)" text-anchor="middle" x="0" y="0">-18</text>
<text class="rt" transform="translate(81.200 692.7) rotate(-90) scale(0.830 0.920)" text-anchor="middle" x="0" y="0">-16</text>
<text class="rt" transform="translate(81.200 672.7) rotate(-90) scale(0.830 0.920)" text-anchor="middle" x="0" y="0">-14</text>
<text class="rt" transform="translate(81.200 652.7) rotate(-90) scale(0.830 0.920)" text-anchor="middle" x="0" y="0">-12</text>
<text class="rt" transform="translate(81.200 632.7) rotate(-90) scale(0.830 0.920)" text-anchor="middle" x="0" y="0">-10</text>
<text class="rt" transform="translate(81.200 612.7) rotate(-90) scale(0.830 0.920)" text-anchor="middle" x="0" y="0">-8</text>
<text class="rt" transform="translate(81.200 592.7) rotate(-90) scale(0.830 0.920)" text-anchor="middle" x="0" y="0">-6</text>
<text class="rt" transform="translate(81.200 572.7) rotate(-90) scale(0.830 0.920)" text-anchor="middle" x="0" y="0">-4</text>
<text class="rt" transform="translate(81.200 552.7) rotate(-90) scale(0.830 0.920)" text-anchor="middle" x="0" y="0">-2</text>
<text class="rt" transform="translate(81.200 532.7) rotate(-90) scale(0.830 0.920)" text-anchor="middle" x="0" y="0">0</text>
<text class="rt" transform="translate(81.200 512.7) rotate(-90) scale(0.830 0.920)" text-anchor="middle" x="0" y="0">2</text>
<text class="rt" transform="translate(81.200 492.7) rotate(-90) scale(0.830 0.920)" text-anchor="middle" x="0" y="0">4</text>
<text class="rt" transform="translate(81.200 472.7) rotate(-90) scale(0.830 0.920)" text-anchor="middle" x="0" y="0">6</text>
<text class="rt" transform="translate(81.200 452.7) rotate(-90) scale(0.830 0.920)" text-anchor="middle" x="0" y="0">8</text>
<text class="rt" transform="translate(81.200 432.7) rotate(-90) scale(0.830 0.920)" text-anchor="middle" x="0" y="0">10</text>
<text class="rt" transform="translate(81.200 412.7) rotate(-90) scale(0.830 0.920)" text-anchor="middle" x="0" y="0">12</text>
<text class="rt" transform="translate(81.200 392.7) rotate(-90) scale(0.830 0.920)" text-anchor="middle" x="0" y="0">14</text>
<text class="rt" transform="translate(81.200 372.7) rotate(-90) scale(0.830 0.920)" text-anchor="middle" x="0" y="0">16</text>
<text class="rt" transform="translate(81.200 352.7) rotate(-90) scale(0.830 0.920)" text-anchor="middle" x="0" y="0">18</text>
<text class="rt" transform="translate(81.200 332.7) rotate(-90) scale(0.830 0.920)" text-anchor="middle" x="0" y="0">20</text>
<text class="rt" transform="translate(81.200 312.7) rotate(-90) scale(0.830 0.920)" text-anchor="middle" x="0" y="0">22</text>
<text class="rt" transform="translate(81.200 292.7) rotate(-90) scale(0.830 0.920)" text-anchor="middle" x="0" y="0">24</text>
<text class="rt" transform="translate(81.200 272.7) rotate(-90) scale(0.830 0.920)" text-anchor="middle" x="0" y="0">26</text>
<text class="rt" transform="translate(81.200 252.7) rotate(-90) scale(0.830 0.920)" text-anchor="middle" x="0" y="0">28</text>
<text class="rt" transform="translate(81.200 232.7) rotate(-90) scale(0.830 0.920)" text-anchor="middle" x="0" y="0">30</text>
<text class="rt" transform="translate(81.200 212.7) rotate(-90) scale(0.830 0.920)" text-anchor="middle" x="0" y="0">32</text>
<text class="rt" transform="translate(81.200 192.7) rotate(-90) scale(0.830 0.920)" text-anchor="middle" x="0" y="0">34</text>
<text class="rt" transform="translate(81.200 172.7) rotate(-90) scale(0.830 0.920)" text-anchor="middle" x="0" y="0">36</text>
<text class="rt" transform="translate(81.200 152.7) rotate(-90) scale(0.830 0.920)" text-anchor="middle" x="0" y="0">38</text>
</g>
<path d="M85 171.5V183.5L91 177.5Z" fill="#000"/>
</svg>
<svg id="canvas" width="1043" height="577" viewBox="95 155 1043 577">
<defs><pattern id="dots" x="96" y="153" width="10" height="10" patternUnits="userSpaceOnUse"><rect x="0" y="0" width="1" height="1" fill="#fff" fill-opacity="0.200"/></pattern></defs>
<rect x="95" y="155" width="1043" height="577" fill="#000"/>
<path d="M116.5 155V732 M216.5 155V732 M316.5 155V732 M416.5 155V732 M516.5 155V732 M616.5 155V732 M716.5 155V732 M816.5 155V732 M916.5 155V732 M1016.5 155V732 M1116.5 155V732 M95 233.5H1138 M95 333.5H1138 M95 433.5H1138 M95 533.5H1138 M95 633.5H1138" stroke="#1e1e1e" stroke-width="1" fill="none"/>
<rect x="95" y="155" width="1043" height="577" fill="url(#dots)"/>
<!-- origin cross -->
<path d="M96 533.5H136M116.5 513V553" stroke="#a00000" stroke-width="1" fill="none"/>
<!-- outer rectangle -->
<rect x="216.5" y="353.5" width="800" height="180" fill="none" stroke="#fff" stroke-width="2.8"/>
<!-- vertical centre lines (unselected, red) -->
<path d="M316.4 333V553M916.4 333V553" stroke="#ff0000" stroke-width="1.3" fill="none" stroke-dasharray="17.8 7 1.2 7" stroke-dashoffset="14"/>
<!-- horizontal centre line (selected) -->
<path d="M196 453.5H1036" stroke="#a54c4c" stroke-width="1" fill="none" stroke-dasharray="17.8 7 1.2 7" stroke-dashoffset="1"/>
<!-- circles (selected) -->
<circle cx="316.5" cy="453.5" r="40" fill="none" stroke="#c0504f" stroke-width="2.6"/>
<circle cx="916.5" cy="453.5" r="40" fill="none" stroke="#c0504f" stroke-width="2.6"/>
<!-- text -->
<text transform="translate(426.500 525.600) rotate(-90)" x="0" y="0" font-family="Liberation Sans, sans-serif" font-size="28.700" fill="#fff" textLength="182.300" lengthAdjust="spacingAndGlyphs">104.245.02.4B</text>
<!-- handles -->
<g fill="#1580ad" stroke="#5a7a86" stroke-width="0.6">
<rect x="311" y="408" width="11" height="11"/><rect x="311" y="488" width="11" height="11"/><rect x="271" y="448" width="11" height="11"/><rect x="351" y="448" width="11" height="11"/>
<rect x="911" y="408" width="11" height="11"/><rect x="911" y="488" width="11" height="11"/><rect x="871" y="448" width="11" height="11"/><rect x="951" y="448" width="11" height="11"/>
</g>
<circle cx="316.5" cy="453.5" r="5.3" fill="#0000c8" stroke="#404080" stroke-width="0.6"/>
<circle cx="916.5" cy="453.5" r="5.3" fill="#0000c8" stroke="#404080" stroke-width="0.6"/>
<rect x="191" y="448" width="11" height="11" fill="#0000b4" stroke="#404080" stroke-width="0.6"/>
<rect x="1031" y="448" width="11" height="11" fill="#cc0a32" stroke="#804050" stroke-width="0.6"/>
<!-- small reference marker -->
<g stroke="#c00000" stroke-width="1" fill="none"><circle cx="196.5" cy="433.5" r="5"/><path d="M191.5 433.5H201.5M196.5 428.5V438.5"/></g>

</svg>
<!-- vertical scrollbar strip -->
<div class="abs" style="left:1138px;top:155px;width:17px;height:577px;background:#fafafa"></div>
<div class="abs" style="left:1143px;top:283px;width:8px;height:321px;background:#7f7f7f;border-radius:4px"></div>
<!-- horizontal scrollbar strip -->
<div class="abs" style="left:95px;top:732px;width:1005px;height:16px;background:#fafafa"></div>
<div class="abs" style="left:281px;top:737px;width:633px;height:8px;background:#7f7f7f;border-radius:4px"></div>
<div class="abs" style="left:1100px;top:732px;width:55px;height:16px;background:#ececec;font-size:12.600px;line-height:18.500px;text-align:right;padding-right:1.500px;color:#111;white-space:nowrap">1 &lt; 10</div>
<!-- splitter + undo box -->
<div class="abs" style="left:72px;top:748px;width:1083px;height:2px;background:#c2c2c2"></div>
<div class="abs" style="left:73px;top:750px;width:1082px;height:21px;background:#fff;border-bottom:1px solid #c4c4c4"></div>
<div class="abs" style="left:77px;top:750px;font-size:13.300px;line-height:17px;color:#111">Undo:</div>
<div class="abs" style="left:1143px;top:750px;width:7px;height:17px;background:#7f7f7f;border-radius:0 0 4px 4px"></div>
<!-- command line -->
<div class="abs" style="left:72px;top:771px;width:1083px;height:27px;background:#ececec"></div>
<div class="abs" style="left:73px;top:777px;font-size:13.300px;line-height:17px;color:#111">Comando:</div>
<div class="abs" style="left:138px;top:776px;width:989px;height:18px;background:#fff"></div>
<div class="abs" style="left:1127px;top:772px;width:26px;height:25px;background:#fafafa;border:1px solid #bdbdbd"></div>
<svg class="abs" style="left:1132px;top:779px" width="16" height="12" viewBox="0 0 16 12"><rect x="0.500" y="0.500" width="15" height="11" fill="#fff" stroke="#111" stroke-width="1"/><rect x="0" y="0" width="16" height="3.5" fill="#111"/></svg>
<!-- splitter between canvas and right panel -->
<div class="abs" style="left:1153px;top:155px;width:2px;height:643px;background:#ececec"></div>
<div class="abs" style="left:1154px;top:108px;width:1.500px;height:690px;background:#c4c4c4"></div>

<div id="rpanel">
<div class="abs" style="left:0;top:0;width:299px;height:22px;background:linear-gradient(#ebebeb,#dedede);border-bottom:1px solid #c6c6c6"></div>
<svg class="abs" style="left:1px;top:3px" width="34" height="15" viewBox="0 0 34 15"><circle cx="7.500" cy="7.200" r="6.900" fill="#686868"/><path d="M5 4.700L10 9.700M10 4.700L5 9.700" stroke="#f0f0f0" stroke-width="1.700" stroke-linecap="round"/><circle cx="25.500" cy="7.200" r="6.900" fill="#686868"/><path d="M24.5 5H29V8.8" stroke="#f0f0f0" stroke-width="1.1" fill="none"/><rect x="22" y="6.7" width="5" height="4" fill="none" stroke="#f0f0f0" stroke-width="1.1"/></svg>
<div class="abs" style="left:67px;top:5px;width:200px;text-align:center;font-size:11.600px;color:#151515;letter-spacing:0.150px">Lista de capas</div>
<div class="abs lbtn" style="left:1px"></div><div class="abs lbtn" style="left:61px"></div><div class="abs lbtn" style="left:121px"></div><div class="abs lbtn" style="left:181px"></div><div class="abs lbtn" style="left:241px;width:58px"></div>
<!--LAYERBTNICONS-->
<div class="abs" style="left:0;top:48px;width:299px;height:642px;background:#fff;border-left:1px solid #c2c2c2;border-top:1px solid #bcbcbc"></div>
<div class="abs sw" style="top:55px;background:#fff"></div><div class="abs ln" style="top:50.500px">0</div>
<div class="abs sw" style="top:75px;background:#ff0000"></div><div class="abs ln" style="top:70.500px">Center</div>
<div class="abs sw" style="top:95px;background:#000"></div><div class="abs ln" style="top:90.500px">Hidden</div>
<div class="abs sw" style="top:115px;background:#fff"></div><div class="abs ln" style="top:110.500px">Visible</div>
<svg class="abs" style="left:1px;top:0" width="298" height="200" viewBox="1156 108 298 200">
<defs><g id="eye"><path d="M-7.700 0.200C-6.500 -3.400 -3 -5.400 0.200 -5.400C3.600 -5.400 6.400 -3.200 7.700 0.300C6 3.800 3.200 5.500 0 5.500C-3.200 5.500 -6 3.600 -7.700 0.200Z" fill="#000"/><path d="M-5.300 0.300C-4 -1.700 -2 -2.500 0 -2.500C2.200 -2.500 4 -1.700 5.100 0C4 2.800 2.200 4.200 0 4.200C-2.200 4.200 -4.200 2.800 -5.300 0.300Z" fill="#fff"/><circle cx="0" cy="-0.100" r="3" fill="#000"/><circle cx="-0.900" cy="-0.700" r="0.700" fill="#999"/></g><g id="lock"><path d="M-3.400 0.600V-2.400A3.400 3.400 0 0 1 3.400 -2.400V0.600" fill="none" stroke="#b9b9b9" stroke-width="1.300"/><rect x="-5" y="0.400" width="10" height="6.400" fill="#b4b4b4"/></g><g id="lpencil"><path d="M0 0L1.600 -3.600L12 -13.200L14.200 -10.900L3.800 -1.300Z" fill="#e8a838" stroke="#a06a18" stroke-width="0.500"/><path d="M12 -13.200L13.200 -14.300Q14.600 -14.600 15.400 -12L14.200 -10.900Z" fill="#e02828" stroke="#a01818" stroke-width="0.400"/><path d="M0 0L1.600 -3.600L3.800 -1.300Z" fill="#e8d0a0"/><path d="M0 0L0.700 -1.500L1.600 -0.600Z" fill="#333"/><path d="M2.600 -2.600L13 -12.200" stroke="#f8d890" stroke-width="0.700"/></g></defs>
<use href="#eye" x="1184.900" y="142.500"/>
<use href="#eye" x="1244.800" y="142.600" opacity="0.330"/>
<path d="M1298.900 141.500H1303.400V137H1306.400V141.500H1310.900V144.500H1306.400V149H1303.400V144.500H1298.900Z" fill="#ff0000" stroke="#a40000" stroke-width="0.600"/>
<rect x="1359" y="141.200" width="12" height="3.600" fill="#ee0000" stroke="#a40000" stroke-width="0.600"/>
<use href="#lpencil" x="1417.600" y="150"/>
<use href="#eye" x="1422.800" y="166.6"/><use href="#lock" x="1445" y="166.6"/>
<use href="#eye" x="1422.800" y="186.6"/><use href="#lock" x="1445" y="186.6"/>
<use href="#eye" x="1422.800" y="206.6"/><use href="#lock" x="1445" y="206.6"/>
<use href="#eye" x="1422.800" y="226.6"/><use href="#lock" x="1445" y="226.6"/>
<use href="#lpencil" x="1394" y="234"/>
</svg>
</div>
<style>
.lbtn{top:22px;width:60px;height:26px;border:1px solid #b2b2b2;background:linear-gradient(#f7f7f7,#e9e9e9)}
.sw{left:6px;width:16px;height:9px;border:1px solid #000}
.ln{left:28px;font-size:13.300px;line-height:17px;color:#111}
</style>
<div id="righttb">
<div class="abs" style="left:8px;top:8px;width:26px;height:2px;background:repeating-linear-gradient(90deg,#a0a0a0 0 2px,transparent 2px 6px)"></div>
<div class="abs" style="left:4px;top:153px;width:40px;height:1px;background:repeating-linear-gradient(90deg,#777 0 1px,transparent 1px 3px)"></div>
<div class="abs" style="left:4px;top:301px;width:40px;height:1px;background:repeating-linear-gradient(90deg,#777 0 1px,transparent 1px 3px)"></div>
<svg class="abs" style="left:0;top:0" width="46" height="420" viewBox="1454 108 46 420">
<rect x="1456.300" y="119.800" width="42.300" height="43" rx="5" fill="#b5b5b5"/>
<rect x="1456.300" y="416.800" width="42.300" height="43" rx="5" fill="#b5b5b5"/>
<rect x="1463.500" y="127.5" width="27.200" height="27" fill="#fff" stroke="#000" stroke-width="1"/><rect x="1463" y="127" width="28.200" height="4.800" fill="#000"/><rect x="1464.200" y="128" width="3.300" height="3.300" fill="#fff"/>
<rect x="1463.500" y="174.7" width="27.200" height="27" fill="#fff" stroke="#000" stroke-width="1"/><rect x="1463" y="174.2" width="28.200" height="4.800" fill="#000"/><rect x="1464.200" y="175.2" width="3.300" height="3.300" fill="#fff"/>
<rect x="1463.500" y="220.3" width="27.200" height="27" fill="#fff" stroke="#000" stroke-width="1"/><rect x="1463" y="219.8" width="28.200" height="4.800" fill="#000"/><rect x="1464.200" y="220.8" width="3.300" height="3.300" fill="#fff"/>
<rect x="1463.500" y="276.5" width="27.200" height="27" fill="#fff" stroke="#000" stroke-width="1"/><rect x="1463" y="276" width="28.200" height="4.800" fill="#000"/><rect x="1464.200" y="277" width="3.300" height="3.300" fill="#fff"/>
<rect x="1463.500" y="322.3" width="27.200" height="27" fill="#fff" stroke="#000" stroke-width="1"/><rect x="1463" y="321.8" width="28.200" height="4.800" fill="#000"/><rect x="1464.200" y="322.8" width="3.300" height="3.300" fill="#fff"/>
<rect x="1463.500" y="368.5" width="27.200" height="27" fill="#fff" stroke="#000" stroke-width="1"/><rect x="1463" y="368" width="28.200" height="4.800" fill="#000"/><rect x="1464.200" y="369" width="3.300" height="3.300" fill="#fff"/>
<rect x="1463.500" y="424.5" width="27.200" height="27" fill="#fff" stroke="#000" stroke-width="1"/><rect x="1463" y="424" width="28.200" height="4.800" fill="#000"/><rect x="1464.200" y="425" width="3.300" height="3.300" fill="#fff"/>
<rect x="1463.500" y="471.5" width="27.200" height="27" fill="#fff" stroke="#000" stroke-width="1"/><rect x="1463" y="471" width="28.200" height="4.800" fill="#000"/><rect x="1464.200" y="472" width="3.300" height="3.300" fill="#fff"/>
<path d="M1470 141.500L1479.500 136.500V146L1470 151Z" fill="#9a9a9a" stroke="#555" stroke-width="0.500"/>
<path d="M1471.800 141.200L1481.300 136.200V145.700L1471.800 150.700Z" fill="#d8d8d8" stroke="#666" stroke-width="0.500"/>
<path d="M1473.600 140.900L1483.100 135.900V145.400L1473.600 150.400Z" fill="#fafafa" stroke="#555" stroke-width="0.600"/>
<path d="M1476 148L1481.500 139.500M1478 147L1481.500 139.500V145.500" stroke="#ff4040" stroke-width="0.600" fill="none"/>
<rect x="1470.200" y="184.500" width="10.800" height="7.200" fill="#f5ecc0" stroke="#555" stroke-width="0.700"/>
<circle cx="1479.300" cy="191" r="4.300" fill="#f5ecc0" stroke="#555" stroke-width="0.700"/>
<path d="M1475 191.700H1481V187" fill="none" stroke="#777" stroke-width="0.600"/>
<rect x="1468.300" y="230" width="17" height="11.400" rx="2.200" fill="#f8f8f6" stroke="#c4d2ea" stroke-width="0.900"/>
<rect x="1466.200" y="284.4" width="4.800" height="2.900" rx="0.600" fill="#000"/><rect x="1473.500" y="284.4" width="14" height="2.900" fill="#fff" stroke="#333" stroke-width="0.600"/>
<rect x="1466.200" y="290.4" width="4.800" height="2.900" rx="0.600" fill="#000"/><rect x="1473.500" y="290.4" width="14" height="2.900" fill="#fff" stroke="#333" stroke-width="0.600"/>
<rect x="1466.200" y="296.4" width="4.800" height="2.900" rx="0.600" fill="#000"/><rect x="1473.500" y="296.4" width="14" height="2.900" fill="#fff" stroke="#333" stroke-width="0.600"/>
<path d="M1469.500 332.200Q1477 329 1484.400 332.200Q1484 334 1479 338.600V344.200L1475.800 342.500V338.600Q1470 334 1469.500 332.200Z" fill="#b4b4b4" stroke="#555" stroke-width="0.600"/>
<ellipse cx="1477" cy="332.200" rx="7.300" ry="1.500" fill="#6a6a6a"/>
<path d="M1469 377.200V391L1474.300 387.400V380.800Z" fill="#fafafa" stroke="#444" stroke-width="0.700"/>
<rect x="1474.300" y="380.600" width="3" height="7" fill="#fff" stroke="#666" stroke-width="0.500"/>
<rect x="1477.300" y="380.400" width="7.700" height="7.400" rx="1.500" fill="#8a8a8a" stroke="#555" stroke-width="0.500"/>
<path d="M1479 380.600V387.600M1481 380.600V387.600M1483 380.600V387.600" stroke="#b8b8b8" stroke-width="0.600"/>
<path d="M1467 384H1487.500" stroke="#ff5a5a" stroke-width="0.600" stroke-dasharray="2.500 0.800 0.600 0.800"/>
<path d="M1465.5 432.7H1479.5" stroke="#9a9a9a" stroke-width="1.100" stroke-dasharray="3 0.600 2 0.500"/>
<path d="M1465.5 436.1H1478.5" stroke="#9a9a9a" stroke-width="1.100" stroke-dasharray="3 0.600 2 0.500"/>
<path d="M1465.5 439.5H1482" stroke="#9a9a9a" stroke-width="1.100" stroke-dasharray="3 0.600 2 0.500"/>
<path d="M1465.5 442.9H1483" stroke="#9a9a9a" stroke-width="1.100" stroke-dasharray="3 0.600 2 0.500"/>
<path d="M1463.500 446.700H1491" stroke="#000" stroke-width="0.700"/>
<text x="1465" y="450.600" font-family="Liberation Sans, sans-serif" font-size="4.600" fill="#222">&gt;</text>
<text x="1472" y="450.600" font-family="Liberation Sans, sans-serif" font-size="4.600" fill="#222" textLength="16.500" lengthAdjust="spacingAndGlyphs">command</text>
<rect x="1470.600" y="481.200" width="12.600" height="12.800" rx="0.800" fill="#c07a28" stroke="#8a5618" stroke-width="0.600"/>
<rect x="1472.200" y="482.600" width="9.400" height="10.200" fill="#f6f6f6"/>
<path d="M1481.600 490V492.800H1478.800Z" fill="#b0b0b0"/>
<path d="M1473.500 485.500H1480M1473.500 487.300H1480M1473.500 489.100H1478.500" stroke="#cfcfcf" stroke-width="0.600"/>
<rect x="1474.300" y="480.400" width="5.400" height="2.200" fill="#8e8e88" stroke="#6a6a64" stroke-width="0.400"/>
<rect x="1475.600" y="479.300" width="2.800" height="1.400" fill="#8e8e88"/>
</svg>
</div>

<div id="statusbar">
<div class="c" style="left:2px;top:8.700px">49.95,35.6342</div>
<div class="c" style="left:2px;top:28.500px">@41.95,25.6342</div>
<div class="abs" style="left:253px;top:4px;width:1px;height:40px;background:#707070;box-shadow:-1px 0 0 #f0f0f0"></div>
<div class="c" style="left:256px;top:8.700px">61.358&lt;36°</div>
<div class="c" style="left:256px;top:28.500px">@49.1621&lt;31°</div>
<div class="abs" style="left:506px;top:21px;width:6px;height:6px;border-radius:3px;background:#d0d0d0"></div>
<div style="left:470px;top:13px;width:229px;text-align:right">Seleccionar entidad o región</div>
<div style="left:470px;top:24px;width:229px;text-align:right">Mover entidad o referencia</div>
<svg class="abs" style="left:716px;top:8px" width="20" height="30" viewBox="0 0 20 30"><rect x="1.5" y="1.5" width="17" height="27" rx="7.5" fill="#fff" stroke="#333" stroke-width="1"/><path d="M1.5 13H18.5M10 1.5V5M10 10V13" stroke="#333" stroke-width="1" fill="none"/><rect x="8.5" y="4.5" width="3" height="6" rx="1.5" fill="#fff" stroke="#333" stroke-width="1"/></svg>
<div class="abs" style="left:940px;top:21px;width:6px;height:6px;border-radius:3px;background:#d0d0d0"></div>
<div style="left:949px;top:13px">Las entidades seleccionadas:</div>
<div style="left:949px;top:24px">3 entidades en 2 capas.</div>
<div class="abs" style="left:1269px;top:21px;width:6px;height:6px;border-radius:3px;background:#d0d0d0"></div>
</div>

<!-- click highlight + mouse cursor -->
<div class="abs" style="left:398.700px;top:16.100px;width:80px;height:80px;border-radius:40px;background:radial-gradient(circle closest-side,rgba(255,255,255,0.140) 0%,rgba(255,255,255,0.120) 76%,rgba(215,226,236,0.450) 80%,rgba(185,203,220,0.600) 86%,rgba(152,176,200,0.800) 92%,rgba(160,182,205,0.700) 96%,rgba(170,190,210,0) 100%)"></div>
<svg class="abs" style="left:434px;top:52px" width="26" height="36" viewBox="434 52 26 36"><path d="M439.300 56.200V78.600L444.300 74L448.600 83.200L452.800 81.300L448.700 72.400L455.200 72.200Z" fill="#fff" stroke="#111" stroke-width="1.100" stroke-linejoin="round"/></svg>

</div></body></html>
